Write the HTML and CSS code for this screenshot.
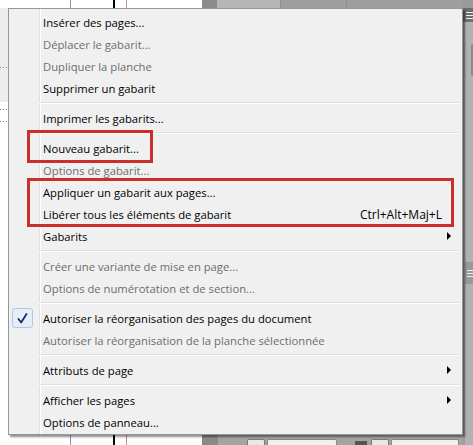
FILE: index.html
```html
<!DOCTYPE html>
<html lang="fr">
<head>
<meta charset="utf-8">
<title>Menu Pages</title>
<link rel="stylesheet" href="styles.css">
</head>
<body>
<div class="app">
  <div class="canvas">
    <div class="pasteboard"></div>
    <div class="guide g1"></div>
    <div class="guide g2"></div>
    <div class="guide g3"></div>
    <div class="dots d1"></div>
    <div class="dots d2"></div>
    <div class="dots d3"></div>
  </div>
  <div class="panels">
    <div class="tabs">
      <div class="tab tab-a"></div>
      <div class="tab tab-b"></div>
      <div class="tab tab-c"></div>
      <div class="tab tab-d"></div>
    </div>
    <div class="panel-body"></div>
    <div class="panel-foot">
      <div class="foot-edge"></div>
      <div class="spin"></div>
      <div class="field"></div>
      <div class="ico"></div>
      <div class="spin"></div>
      <div class="field field-b"></div>
    </div>
  </div>
  <div class="sidebar">
    <div class="side-top"></div>
    <div class="side-head">
      <span></span><span></span><span></span>
    </div>
    <div class="side-body">
      <div class="side-knob"></div>
      <div class="side-grip"><span></span><span></span><span></span></div>
    </div>
  </div>
</div>

<div class="menu">
  <div class="item">Insérer des pages...</div>
  <div class="item disabled">Déplacer le gabarit...</div>
  <div class="item disabled">Dupliquer la planche</div>
  <div class="item">Supprimer un gabarit</div>
  <div class="sep"></div>
  <div class="item">Imprimer les gabarits...</div>
  <div class="sep"></div>
  <div class="item">Nouveau gabarit...</div>
  <div class="item disabled">Options de gabarit...</div>
  <div class="item">Appliquer un gabarit aux pages...</div>
  <div class="item"><span class="label">Libérer tous les éléments de gabarit</span><span class="shortcut">Ctrl+Alt+Maj+L</span><span class="slot"></span></div>
  <div class="item"><span class="label">Gabarits</span><span class="slot"><i class="arrow"></i></span></div>
  <div class="sep"></div>
  <div class="item disabled">Créer une variante de mise en page...</div>
  <div class="item disabled">Options de numérotation et de section...</div>
  <div class="sep"></div>
  <div class="item checked"><span class="check"><svg width="13" height="13" viewBox="0 0 13 13"><path d="M2.5 7 L5.2 10.5 L10.5 2" fill="none" stroke="#1c2a6e" stroke-width="1.8" stroke-linecap="round" stroke-linejoin="round"/></svg></span>Autoriser la réorganisation des pages du document</div>
  <div class="item disabled">Autoriser la réorganisation de la planche sélectionnée</div>
  <div class="sep"></div>
  <div class="item"><span class="label">Attributs de page</span><span class="slot"><i class="arrow"></i></span></div>
  <div class="sep"></div>
  <div class="item"><span class="label">Afficher les pages</span><span class="slot"><i class="arrow"></i></span></div>
  <div class="item">Options de panneau...</div>

  <div class="mark mark-1"></div>
  <div class="mark mark-2"></div>
</div>
</body>
</html>
```

FILE: styles.css
```css
html, body {
  margin: 0;
  padding: 0;
}
body {
  width: 473px;
  height: 445px;
  overflow: hidden;
  position: relative;
  background: #fff;
  font-family: "Open Sans", "Noto Sans", "Liberation Sans", sans-serif;
}

/* ---------- background application ---------- */
.app {
  display: flex;
  height: 445px;
}
.canvas {
  width: 202px;
  position: relative;
  background: #fff;
}
.pasteboard {
  position: absolute;
  left: 0;
  top: 8px;
  width: 8px;
  height: 94px;
  background: #ececec;
}
.guide {
  position: absolute;
  top: 0;
  bottom: 0;
  width: 1px;
}
.g1 { left: 70px; background: #9a88c4; }
.g2 { left: 113px; width: 2px; background: #000; }
.g3 { left: 126px; background: #c8909a; }
.dots {
  position: absolute;
  left: 0;
  width: 8px;
  height: 1px;
  background: repeating-linear-gradient(to right, #c07070 0 1px, transparent 1px 3px);
}
.d1 { top: 67px; }
.d2 { top: 109px; }
.d3 { top: 121px; }

.panels {
  flex: 1;
  display: flex;
  flex-direction: column;
  background: #a2a2a2;
}
.tabs {
  height: 8px;
  display: flex;
}
.tab { height: 8px; }
.tab-a { width: 15px; background: #8c8c8c; }
.tab-b { width: 63px; background: #b6b6b6; }
.tab-c { width: 65px; background: #9e9e9e; border-left: 1px solid #8e8e8e; }
.tab-d { flex: 1; background: #9e9e9e; border-left: 1px solid #8e8e8e; }
.panel-body { flex: 1; background: #a8a8a8; }
.panel-foot {
  height: 10px;
  display: flex;
  align-items: flex-end;
  gap: 2px;
  background: #a4a4a4;
}
.foot-edge { width: 16px; height: 10px; background: #8a8a8a; margin-right: 27px; }
.spin { width: 16px; height: 5px; background: #e8e8e8; border: 1px solid #777; border-bottom: 0; border-radius: 2px 2px 0 0; }
.field { width: 68px; height: 5px; background: #f0f0f0; border: 1px solid #888; border-bottom: 0; border-radius: 2px 2px 0 0; margin-right: 16px; }
.ico { width: 12px; height: 4px; background: #555; margin-right: 2px; }
.field-b { width: 66px; margin-right: 0; }

.sidebar {
  width: 10px;
  display: flex;
  flex-direction: column;
  background: #8d8d8d;
}
.side-top { height: 8px; background: #9a9a9a; }
.side-head {
  height: 14px;
  background: #6e6e6e;
  display: flex;
  flex-direction: column;
  justify-content: center;
  gap: 2px;
  padding-left: 3px;
}
.side-head span, .side-grip span {
  display: block;
  height: 1px;
  background: #eee;
}
.side-body {
  flex: 1;
  background: #b2b2b2;
  border-left: 2px solid #9c9c9c;
  position: relative;
  padding-top: 22px;
}
.side-knob {
  margin-left: 6px;
  height: 32px;
  background: #8a8a8a;
  border-radius: 3px 0 0 3px;
}
.side-grip {
  margin-top: 186px;
  height: 22px;
  background: #999;
  display: flex;
  flex-direction: column;
  justify-content: center;
  gap: 2px;
  padding-left: 2px;
}

/* ---------- context menu (overlay) ---------- */
.menu {
  position: absolute;
  left: 8px;
  top: 8px;
  width: 455px;
  height: 427px;
  box-sizing: border-box;
  border: 1px solid #979797;
  padding: 2px 2px 1px 2px;
  background:
    linear-gradient(to right, transparent 30px, #e0e1e1 30px, #e0e1e1 31px, #fff 31px, #fff 32px, transparent 32px),
    #f0f0f0;
  box-shadow: 2px 2px 2px rgba(0, 0, 0, 0.45);
  font-size: 11.25px;
  color: #000;
}
.item {
  position: relative;
  height: 22px;
  display: flex;
  align-items: center;
  padding-left: 32px;
  white-space: nowrap;
}
.item.disabled { color: #6d6d6d; }
.label { flex: 1; }
.shortcut { font-size: 12px; }
.slot {
  width: 18px;
  height: 22px;
  position: relative;
  flex: none;
}
.arrow {
  position: absolute;
  left: 5px;
  top: 7px;
  width: 0;
  height: 0;
  border-left: 4px solid #000;
  border-top: 4px solid transparent;
  border-bottom: 4px solid transparent;
}
.sep {
  height: 8px;
  margin-left: 28px;
  box-sizing: border-box;
  padding-top: 3px;
}
.sep::before {
  content: "";
  display: block;
  height: 1px;
  background: #e0e0e0;
  border-bottom: 1px solid #fff;
}
.check {
  position: absolute;
  left: 1px;
  top: 1px;
  width: 21px;
  height: 20px;
  box-sizing: border-box;
  border: 1px solid #aec8e6;
  border-radius: 3px;
  background: #e6eef8;
  display: flex;
  align-items: center;
  justify-content: center;
}
.mark {
  position: absolute;
  left: 18px;
  border: 3px solid #c9302c;
  box-sizing: border-box;
}
.mark-1 { top: 121px; width: 126px; height: 33px; }
.mark-2 { top: 169px; width: 427px; height: 49px; }
```
